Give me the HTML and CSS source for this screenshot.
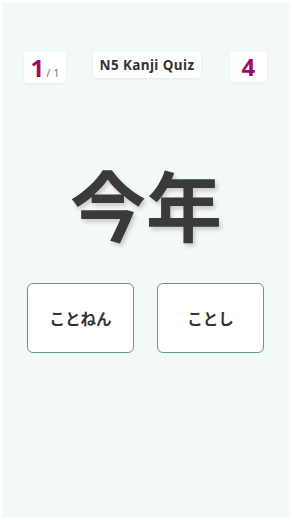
FILE: index.html
```html
<!DOCTYPE html>
<html lang="ja">
<head>
  <meta charset="UTF-8">
  <meta name="viewport" content="width=device-width, initial-scale=1.0">
  <title>N5 Kanji Quiz</title>
  <link rel="stylesheet" href="styles.css">
</head>
<body>

<div class="screen">
  <!-- Top bar -->
  <div class="topbar">
    <div class="box progress">
      <span class="current">1</span><span class="total">/ 1</span>
    </div>
    <div class="box title">N5 Kanji Quiz</div>
    <div class="box score">4</div>
  </div>

  <!-- Question -->
  <div class="kanji">今年</div>

  <!-- Answers -->
  <div class="answers">
    <button class="answer">ことねん</button>
    <button class="answer">ことし</button>
  </div>
</div>

</body>
</html>
```

FILE: styles.css
```css
body {
  margin: 0;
  background-color: #ffffff;
  font-family: "Noto Sans", "Noto Sans CJK JP", sans-serif;
}

.screen {
  margin: 2px;
  height: 516px;
  background-color: #f3f9f6;
  box-sizing: border-box;
  padding-top: 50px;
}

.topbar {
  display: flex;
  justify-content: space-between;
  align-items: flex-start;
  padding: 0 23px 0 22px;
}

.box {
  background-color: #fff;
  border-radius: 4px;
  box-shadow: 0 1px 3px rgba(0, 0, 0, 0.06);
}

.progress {
  width: 42px;
  height: 31px;
  display: flex;
  align-items: baseline;
  justify-content: center;
  padding-top: 1px;
  box-sizing: border-box;
}

.progress .current {
  color: #a10a62;
  font-size: 24px;
  font-weight: bold;
  line-height: 30px;
}

.progress .total {
  color: #777;
  font-size: 11px;
  margin-left: 2px;
}

.title {
  height: 26px;
  padding: 0 7px;
  line-height: 26px;
  font-size: 13.5px;
  font-weight: bold;
  color: #333;
  letter-spacing: 0.4px;
  margin-left: -2px;
}

.score {
  width: 37px;
  height: 30px;
  line-height: 30px;
  text-align: center;
  color: #a10a62;
  font-size: 24px;
  font-weight: bold;
}

.kanji {
  margin-top: 70px;
  text-align: center;
  font-family: "Noto Sans CJK JP", sans-serif;
  font-size: 76px;
  font-weight: bold;
  line-height: 100px;
  color: #3a3a3a;
  text-shadow: 2px 3px 4px rgba(0, 0, 0, 0.18);
}

.answers {
  display: flex;
  justify-content: space-between;
  padding: 0 26px 0 25px;
  margin-top: 30px;
}

.answer {
  width: 107px;
  height: 70px;
  background-color: #fff;
  border: 1px solid #5f9f7c;
  border-radius: 6px;
  font-family: "Noto Sans CJK JP", sans-serif;
  font-size: 15.5px;
  font-weight: bold;
  color: #333;
  padding: 0;
}
```
